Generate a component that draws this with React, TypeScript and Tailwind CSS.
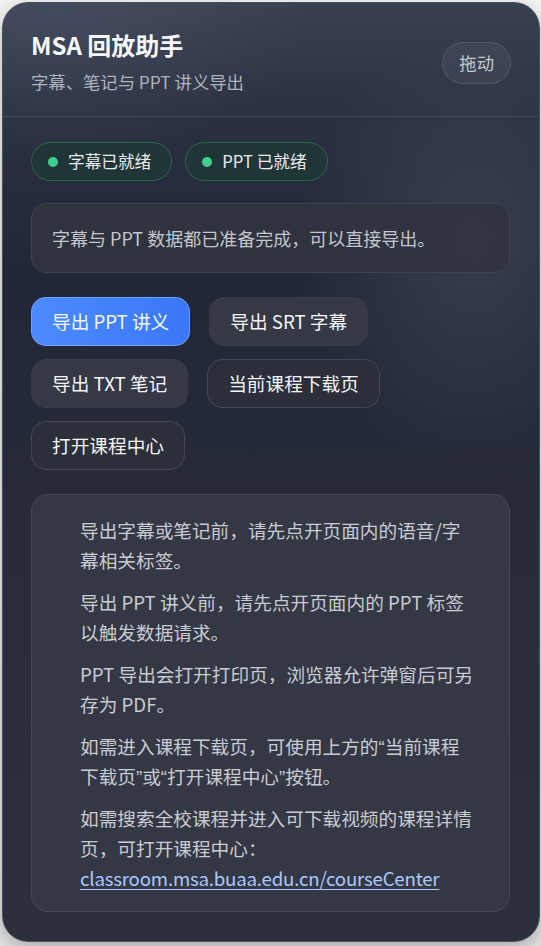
import React from "react";

const Q = ({ c }: { c: string }) => <span className="font-['Liberation_Sans',sans-serif] leading-none">{c}</span>;

const tips: React.ReactNode[] = [
    "导出字幕或笔记前，请先点开页面内的语音/字幕相关标签。",
    "导出 PPT 讲义前，请先点开页面内的 PPT 标签以触发数据请求。",
    "PPT 导出会打开打印页，浏览器允许弹窗后可另存为 PDF。",
    <>如需进入课程下载页，可使用上方的<Q c="“" />当前课程下载页<Q c="”" />或<Q c="“" />打开课程中心<Q c="”" />按钮。</>,
];

const StatusPill = ({ label }: { label: string }) => (
    <div className="flex items-center h-[39px] pl-[16px] pr-[20px] rounded-full border border-[#2d6450] bg-[#203636]">
        <span className="w-[10px] h-[10px] rounded-full bg-[#3fcf8e]" />
        <span className="ml-[10px] text-[16.67px] text-[#e8eaee] leading-none">{label}</span>
    </div>
);

const ActionButton = ({ label, variant }: { label: string; variant: "primary" | "soft" | "outline" }) => {
    let cls = "";
    if (variant == "primary") {
        cls = "bg-[linear-gradient(90deg,#4c8bff,#3a77f6)] border-[#6f9eff] border-b-[#7aa6ff]";
    }
    if (variant == "soft") {
        cls = "bg-[#353945] border-[#393d49]";
    }
    if (variant == "outline") {
        cls = "bg-[#2b2f3a] border-[#434754]";
    }
    return (
        <button type="button" className={`h-[49px] px-[20px] rounded-[15px] border text-[18.67px] text-[#f3f5f8] leading-none ${cls}`}>
            {label}
        </button>
    );
};

export default function App() {
    return (
        <div className="min-h-[946px] bg-[linear-gradient(180deg,#f3f3f3,#e4e4e4)] pl-[2px] pr-[1px] pt-[2px] font-['Noto_Sans_CJK_SC',sans-serif]">
            <div className="w-[538px] rounded-[26px] overflow-hidden border border-[#485062] shadow-[0_6px_18px_rgba(0,0,0,0.25)] bg-[radial-gradient(ellipse_180px_220px_at_88%_26%,rgba(78,82,98,0.5),transparent),radial-gradient(ellipse_260px_160px_at_10%_0%,rgba(80,90,110,0.45),transparent),linear-gradient(180deg,#394051_0%,#293040_12%,#222736_30%,#282c39_60%,#2c303c_100%)]">
                {/* header */}
                <div className="flex items-center justify-between pl-[28px] pr-[28px] pt-[27px] pb-[21px] border-b border-white/10">
                    <div>
                        <div className="text-[24px] leading-[30px] font-bold text-[#f6f7f9]">MSA 回放助手</div>
                        <div className="mt-[9px] text-[17.33px] leading-[26px] text-[#aeb3bd]">字幕、笔记与 PPT 讲义导出</div>
                    </div>
                    <button type="button" className="h-[42px] px-[16px] rounded-full border border-white/10 bg-white/5 text-[17.33px] text-[#c6c9d0] leading-none">
                        拖动
                    </button>
                </div>

                {/* body */}
                <div className="pl-[28px] pr-[29px] pt-[25px] pb-[29px]">
                    <div className="flex gap-[13px]">
                        <StatusPill label="字幕已就绪" />
                        <StatusPill label="PPT 已就绪" />
                    </div>

                    <div className="mt-[22px] h-[70px] flex items-center px-[20px] rounded-[15px] border border-[#3d4150] bg-[#30343f]/90 text-[18px] text-[#c3c6cd]">
                        字幕与 PPT 数据都已准备完成，可以直接导出。
                    </div>

                    <div className="mt-[24px] flex flex-wrap gap-x-[19px] gap-y-[13px]">
                        <ActionButton label="导出 PPT 讲义" variant="primary" />
                        <ActionButton label="导出 SRT 字幕" variant="soft" />
                        <ActionButton label="导出 TXT 笔记" variant="soft" />
                        <ActionButton label="当前课程下载页" variant="outline" />
                        <ActionButton label="打开课程中心" variant="outline" />
                    </div>

                    <div className="mt-[24px] rounded-[17px] border border-[#434756] bg-[#343844] pl-[48px] pr-[35px] pt-[20px] pb-[18px] text-[18.67px] leading-[30px] text-[#c8cbd2]">
                        {tips.map((t, i) => (
                            <p key={i} className="mb-[12px]">{t}</p>
                        ))}
                        <p>
                            如需搜索全校课程并进入可下载视频的课程详情页，可打开课程中心：
                            <a href="#" className="text-[#a9c9ff] underline underline-offset-[3px] tracking-[-0.2px]">classroom.msa.buaa.edu.cn/courseCenter</a>
                        </p>
                    </div>
                </div>
            </div>
        </div>
    );
}
